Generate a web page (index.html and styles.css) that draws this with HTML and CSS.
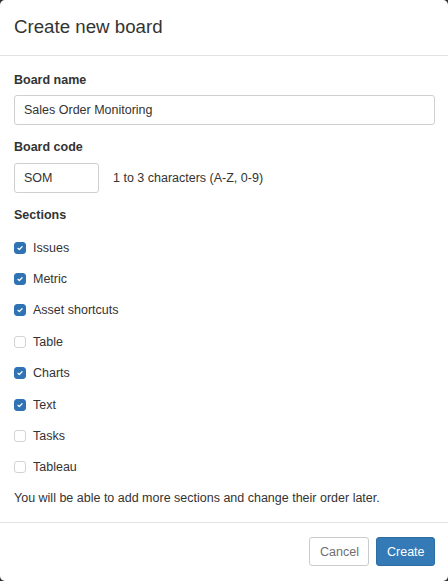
FILE: index.html
```html
<!DOCTYPE html>
<html>
<head>
<meta charset="utf-8">
<link rel="stylesheet" href="styles.css">
</head>
<body>
<div class="modal">
  <div class="modal-header">
    <h4 class="modal-title">Create new board</h4>
  </div>
  <div class="modal-body">
    <label class="field-label">Board name</label>
    <div class="input input-wide">Sales Order Monitoring</div>
    <label class="field-label label-gap">Board code</label>
    <div class="code-row">
      <div class="input input-code">SOM</div>
      <span class="help">1 to 3 characters (A-Z, 0-9)</span>
    </div>
    <label class="field-label label-gap sections-label">Sections</label>
    <div class="checks">
      <div class="check-row"><span class="box checked"><svg viewBox="0 0 13 13" width="13" height="13"><path d="M3.8 6.9 L5.6 8.5 L9.2 4.9" fill="none" stroke="#fff" stroke-width="1.6" stroke-linecap="round" stroke-linejoin="round"/></svg></span><span>Issues</span></div>
      <div class="check-row"><span class="box checked"><svg viewBox="0 0 13 13" width="13" height="13"><path d="M3.8 6.9 L5.6 8.5 L9.2 4.9" fill="none" stroke="#fff" stroke-width="1.6" stroke-linecap="round" stroke-linejoin="round"/></svg></span><span>Metric</span></div>
      <div class="check-row"><span class="box checked"><svg viewBox="0 0 13 13" width="13" height="13"><path d="M3.8 6.9 L5.6 8.5 L9.2 4.9" fill="none" stroke="#fff" stroke-width="1.6" stroke-linecap="round" stroke-linejoin="round"/></svg></span><span>Asset shortcuts</span></div>
      <div class="check-row"><span class="box"></span><span>Table</span></div>
      <div class="check-row"><span class="box checked"><svg viewBox="0 0 13 13" width="13" height="13"><path d="M3.8 6.9 L5.6 8.5 L9.2 4.9" fill="none" stroke="#fff" stroke-width="1.6" stroke-linecap="round" stroke-linejoin="round"/></svg></span><span>Charts</span></div>
      <div class="check-row"><span class="box checked"><svg viewBox="0 0 13 13" width="13" height="13"><path d="M3.8 6.9 L5.6 8.5 L9.2 4.9" fill="none" stroke="#fff" stroke-width="1.6" stroke-linecap="round" stroke-linejoin="round"/></svg></span><span>Text</span></div>
      <div class="check-row"><span class="box"></span><span>Tasks</span></div>
      <div class="check-row"><span class="box"></span><span>Tableau</span></div>
    </div>
    <p class="note">You will be able to add more sections and change their order later.</p>
  </div>
  <div class="modal-footer">
    <button class="btn btn-default">Cancel</button>
    <button class="btn btn-primary">Create</button>
  </div>
</div>
</body>
</html>
```

FILE: styles.css
```css
html, body {
  margin: 0;
  padding: 0;
  background: #2a2f36;
}
body {
  font-family: "Liberation Sans", Arial, sans-serif;
  font-size: 12.5px;
  color: #333;
}
.modal {
  width: 448px;
  height: 581px;
  background: #fff;
  border-radius: 5px;
  display: flex;
  flex-direction: column;
  box-sizing: border-box;
}
.modal-header {
  height: 55px;
  border-bottom: 1px solid #e2e2e2;
  display: flex;
  align-items: center;
  padding: 0 14px;
}
.modal-title {
  margin: 0;
  font-size: 18.7px;
  font-weight: 400;
  color: #333;
}
.modal-body {
  padding: 15px 13px 15px 14px;
  display: flex;
  flex-direction: column;
  flex: 1;
}
.field-label {
  display: block;
  font-weight: 700;
  line-height: 18px;
  margin-bottom: 6px;
}
.label-gap {
  margin-top: 13px;
  margin-bottom: 7px;
}
.input {
  box-sizing: border-box;
  height: 30px;
  border: 1px solid #cfcfcf;
  border-radius: 3px;
  padding: 0 9px;
  display: flex;
  align-items: center;
  color: #333;
}
.code-row {
  display: flex;
  align-items: center;
  gap: 14px;
}
.input-code {
  width: 85px;
}
.sections-label {
  margin-bottom: 8px;
}
.checks {
  display: flex;
  flex-direction: column;
}
.check-row {
  height: 31.4px;
  display: flex;
  align-items: center;
  gap: 7px;
}
.box {
  width: 12px;
  height: 12px;
  box-sizing: border-box;
  border: 1px solid #d3d3d3;
  border-radius: 3px;
  background: #fff;
  display: flex;
  align-items: center;
  justify-content: center;
  flex: none;
}
.box.checked {
  background: #2f73b5;
  border-color: #2f73b5;
}
.box svg {
  width: 12px;
  height: 12px;
  display: block;
}
.note {
  margin: 6px 0 0 0;
  line-height: 18px;
}
.modal-footer {
  border-top: 1px solid #e2e2e2;
  padding: 14px 13px 15px 14px;
  display: flex;
  justify-content: flex-end;
  gap: 7px;
}
.btn {
  font-family: "Liberation Sans", Arial, sans-serif;
  font-size: 12.5px;
  height: 29px;
  border-radius: 3px;
  padding: 0 10px;
  cursor: pointer;
}
.btn-default {
  width: 60px;
  background: #fff;
  border: 1px solid #cccccc;
  color: #6f6f6f;
}
.btn-primary {
  width: 59px;
  background: #337ab7;
  border: 1px solid #2e6da4;
  color: #fff;
}
```
